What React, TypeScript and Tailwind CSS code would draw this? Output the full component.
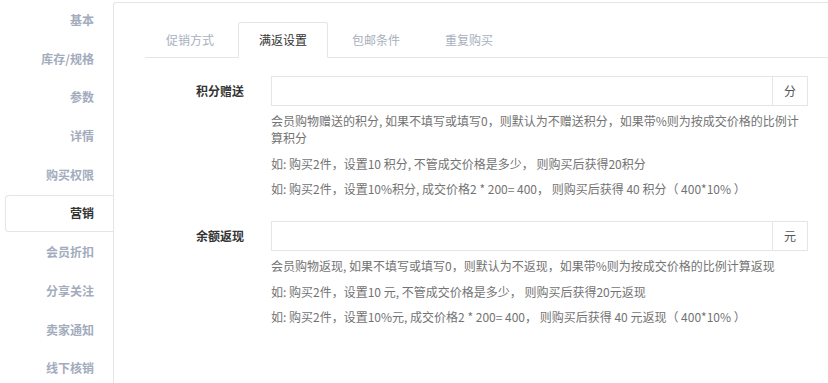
import React from 'react';

const sideItems = ['基本', '库存/规格', '参数', '详情', '购买权限', '营销', '会员折扣', '分享关注', '卖家通知', '线下核销'];
const activeSide = '营销';

const tabs = ['促销方式', '满返设置', '包邮条件', '重复购买'];
const activeTab = '满返设置';

const rows = [
  {
    label: '积分赠送',
    unit: '分',
    help: [
      '会员购物赠送的积分, 如果不填写或填写0，则默认为不赠送积分，如果带%则为按成交价格的比例计算积分',
      '如: 购买2件，设置10 积分, 不管成交价格是多少， 则购买后获得20积分',
      '如: 购买2件，设置10%积分, 成交价格2 * 200= 400， 则购买后获得 40 积分（ 400*10% ）',
    ],
  },
  {
    label: '余额返现',
    unit: '元',
    help: [
      '会员购物返现, 如果不填写或填写0，则默认为不返现，如果带%则为按成交价格的比例计算返现',
      '如: 购买2件，设置10 元, 不管成交价格是多少， 则购买后获得20元返现',
      '如: 购买2件，设置10%元, 成交价格2 * 200= 400， 则购买后获得 40 元返现（ 400*10% ）',
    ],
  },
];

export default function App() {
  return (
    <div
      className="flex h-[383px] w-[828px] overflow-hidden bg-white"
      style={{ fontFamily: '"Noto Sans CJK SC", "Noto Sans", sans-serif' }}
    >
      {/* Sidebar */}
      <aside className="flex w-[113px] shrink-0 flex-col pt-[1.5px]">
        {sideItems.map((item) => {
          const active = item === activeSide;
          return (
            <div key={item} className="flex h-[38.7px] shrink-0 items-start">
              <div
                className={
                  active
                    ? 'ml-[5px] flex h-[37px] flex-1 items-center justify-end rounded-l-[4px] border border-r-0 border-[#e5e5e5] bg-white pr-[19px] text-[12px] font-bold text-[#333]'
                    : 'ml-[5px] flex h-[37px] flex-1 items-center justify-end pr-[19px] text-[12px] font-bold text-[#a3acbd]'
                }
              >
                {item}
              </div>
            </div>
          );
        })}
      </aside>

      {/* Main panel */}
      <main className="mt-[2px] flex-1 rounded-tl-[3px] border-l border-t border-[#e5e5e5]">
        {/* Tabs */}
        <ul className="ml-[31px] mt-[19px] flex border-b border-[#e5e5e5]">
          {tabs.map((tab) => {
            const active = tab === activeTab;
            return (
              <li
                key={tab}
                className={
                  active
                    ? '-mb-px mr-[3px] flex h-[36px] w-[90px] items-center justify-center rounded-t-[3px] border border-[#e5e5e5] border-b-white bg-white pb-px text-[12px] text-[#333]'
                    : 'mr-[3px] flex h-[35px] w-[90px] items-center justify-center border border-transparent text-[12px] text-[#a8b0bd]'
                }
              >
                {tab}
              </li>
            );
          })}
        </ul>

        {/* Form */}
        <div className="mt-[18px] flex flex-col gap-[24px]">
          {rows.map((row) => (
            <div key={row.label} className="flex">
              <label className="h-[30px] w-[130px] shrink-0 text-right text-[12px] font-bold leading-[30px] text-[#333]">
                {row.label}
              </label>
              <div className="ml-[27px] w-[537px] shrink-0">
                <div className="flex h-[30px] border border-[#e5e5e5]">
                  <input className="min-w-0 flex-1 px-2 text-[12px] outline-none" />
                  <span className="flex w-[35px] items-center justify-center border-l border-[#e5e5e5] text-[12px] text-[#555]">
                    {row.unit}
                  </span>
                </div>
                <div className="mt-[6px] flex flex-col gap-[8.5px] text-[12px] leading-[17px] text-[#737373]">
                  {row.help.map((line) => (
                    <p key={line}>{line}</p>
                  ))}
                </div>
              </div>
            </div>
          ))}
        </div>
      </main>
    </div>
  );
}
